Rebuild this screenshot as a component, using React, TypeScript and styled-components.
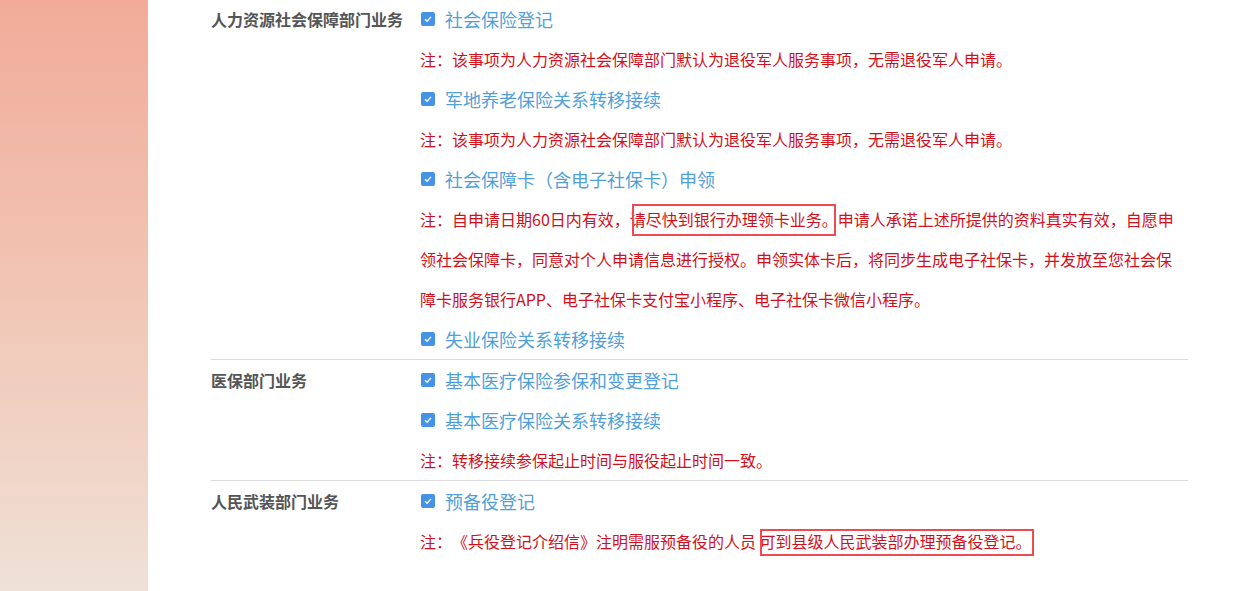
import React from 'react';
import styled, { createGlobalStyle } from 'styled-components';

const GlobalStyle = createGlobalStyle`
  html, body {
    margin: 0;
    padding: 0;
    background: #ffffff;
    font-family: 'Noto Sans CJK SC', 'Noto Sans', sans-serif;
    text-spacing-trim: space-all;
  }
`;

const Page = styled.div`
  display: flex;
  width: 1251px;
  height: 591px;
  overflow: hidden;
  background: #ffffff;
`;

const Sidebar = styled.div`
  flex: 0 0 148px;
  height: 100%;
  background: linear-gradient(180deg, #f2ab99 0%, #f1c3b2 45%, #efe1d6 100%);
`;

const Main = styled.div`
  flex: 1;
  padding-left: 63px;
`;

const Table = styled.div`
  width: 977px;
  margin-top: -1px;
`;

const Section = styled.div<{ last?: boolean }>`
  display: grid;
  grid-template-columns: 209px 1fr;
  border-bottom: ${({ last }) => (last ? 'none' : '1px solid #dcdcdc')};
`;

const Label = styled.div`
  font-size: 16px;
  line-height: 40px;
  font-weight: 700;
  color: #555555;
`;

const Content = styled.div`
  padding-right: 10px;
`;

const ItemRow = styled.div`
  display: flex;
  align-items: center;
  gap: 10px;
  height: 40px;
  padding-left: 1px;
  font-size: 18px;
  color: #519fd8;
`;

const CheckBox = styled.span`
  display: inline-flex;
  align-items: center;
  justify-content: center;
  width: 14px;
  height: 14px;
  border-radius: 2px;
  background: #4593e6;
  flex: 0 0 14px;
`;

const Note = styled.p`
  margin: 0;
  font-size: 16px;
  line-height: 40px;
  color: #d2101c;
  text-spacing-trim: space-all;
`;

const Mark = styled.span<{ $top: number; $bottom: number; $left: number; $right: number }>`
  position: relative;

  &::after {
    content: '';
    position: absolute;
    top: ${({ $top }) => $top}px;
    bottom: ${({ $bottom }) => $bottom}px;
    left: ${({ $left }) => $left}px;
    right: ${({ $right }) => $right}px;
    border: 2px solid #ef4a51;
    pointer-events: none;
  }
`;

const Check = () => (
  <svg width='10' height='10' viewBox='0 0 10 10'>
    <path d='M2 5.2 L4.1 7.2 L8 2.9' stroke='#ffffff' strokeWidth='1.4' fill='none' />
  </svg>
);

const Item: React.FC<{ text: string }> = ({ text }) => (
  <ItemRow>
    <CheckBox>
      <Check />
    </CheckBox>
    <span>{text}</span>
  </ItemRow>
);

const App = () => {
  const defaultNote =
    '注：该事项为人力资源社会保障部门默认为退役军人服务事项，无需退役军人申请。';

  return (
    <>
      <GlobalStyle />
      <Page>
        <Sidebar />
        <Main>
          <Table>
            <Section>
              <Label>人力资源社会保障部门业务</Label>
              <Content>
                <Item text='社会保险登记' />
                <Note>{defaultNote}</Note>
                <Item text='军地养老保险关系转移接续' />
                <Note>{defaultNote}</Note>
                <Item text='社会保障卡（含电子社保卡）申领' />
                <Note>
                  注：自申请日期60日内有效，
                  <Mark $top={-3} $bottom={-5} $left={2} $right={2}>
                    请尽快到银行办理领卡业务。
                  </Mark>
                  申请人承诺上述所提供的资料真实有效，自愿申领社会保障卡，同意对个人申请信息进行授权。申领实体卡后，将同步生成电子社保卡，并发放至您社会保障卡服务银行APP、电子社保卡支付宝小程序、电子社保卡微信小程序。
                </Note>
                <Item text='失业保险关系转移接续' />
              </Content>
            </Section>
            <Section>
              <Label>医保部门业务</Label>
              <Content>
                <Item text='基本医疗保险参保和变更登记' />
                <Item text='基本医疗保险关系转移接续' />
                <Note>注：转移接续参保起止时间与服役起止时间一致。</Note>
              </Content>
            </Section>
            <Section last>
              <Label>人民武装部门业务</Label>
              <Content>
                <Item text='预备役登记' />
                <Note>
                  注：《兵役登记介绍信》注明需服预备役的人员{' '}
                  <Mark $top={0} $bottom={-3} $left={0} $right={-2}>
                    可到县级人民武装部办理预备役登记。
                  </Mark>
                </Note>
              </Content>
            </Section>
          </Table>
        </Main>
      </Page>
    </>
  );
};

export default App;
